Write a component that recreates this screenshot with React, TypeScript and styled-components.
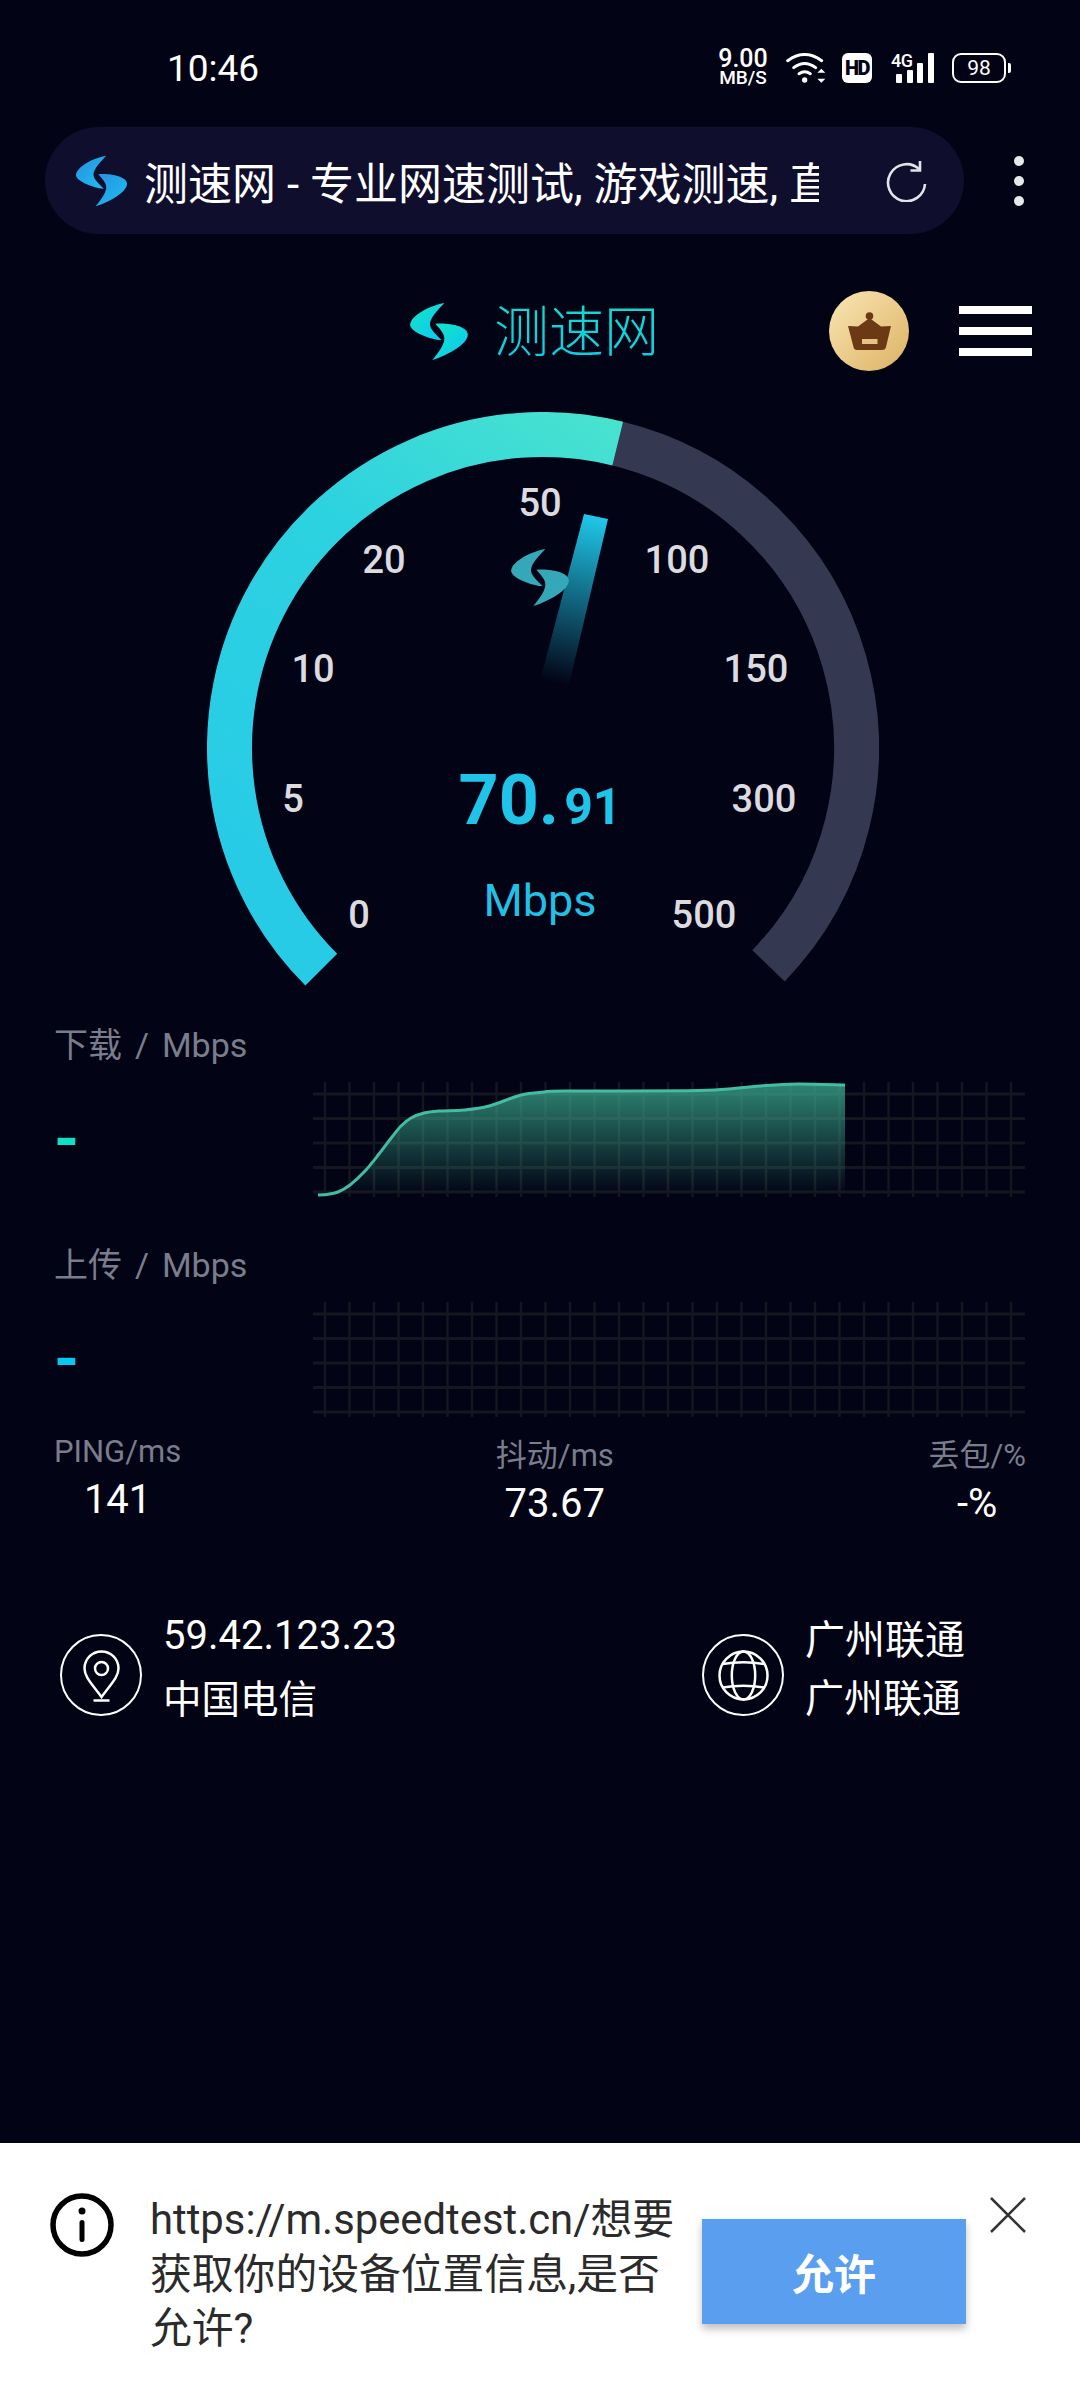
import React from "react";
import styled, { createGlobalStyle } from "styled-components";

const FONT = `Roboto, "Noto Sans CJK SC", sans-serif`;
const GAUGE_CX = 336;
const GAUGE_R = 313.5;

const GlobalStyle = createGlobalStyle`
  html, body {
    margin: 0;
    padding: 0;
    background: #020314;
  }
  * {
    box-sizing: border-box;
  }
`;

function polar(deg: number) {
  const rad = (deg * Math.PI) / 180;
  return {
    x: GAUGE_CX + GAUGE_R * Math.sin(rad),
    y: GAUGE_CX - GAUGE_R * Math.cos(rad),
  };
}

function arcPath(from: number, to: number) {
  const a = polar(from);
  const b = polar(to);
  const large = to - from > 180 ? 1 : 0;
  return `M${a.x} ${a.y} A${GAUGE_R} ${GAUGE_R} 0 ${large} 1 ${b.x} ${b.y}`;
}

// catmull-rom through the sampled points, so the line stays smooth
function smoothPath(pts: number[][]) {
  let d = `M${pts[0][0]} ${pts[0][1]}`;
  for (let i = 0; i < pts.length - 1; i++) {
    const p0 = pts[i - 1] || pts[i];
    const p1 = pts[i];
    const p2 = pts[i + 1];
    const p3 = pts[i + 2] || p2;
    const c1x = p1[0] + (p2[0] - p0[0]) / 6;
    const c1y = p1[1] + (p2[1] - p0[1]) / 6;
    const c2x = p2[0] - (p3[0] - p1[0]) / 6;
    const c2y = p2[1] - (p3[1] - p1[1]) / 6;
    d += ` C${c1x} ${c1y} ${c2x} ${c2y} ${p2[0]} ${p2[1]}`;
  }
  return d;
}

const TICKS = [
  { label: "0", x: 152, y: 502.5 },
  { label: "5", x: 86, y: 386.5 },
  { label: "10", x: 106, y: 256.5 },
  { label: "20", x: 177, y: 147.5 },
  { label: "50", x: 333, y: 90.5 },
  { label: "100", x: 470, y: 147.5 },
  { label: "150", x: 549, y: 256.5 },
  { label: "300", x: 557, y: 386.5 },
  { label: "500", x: 497, y: 502.5 },
];

const CURVE = smoothPath([
  [5, 115],
  [14, 114.5],
  [25, 112],
  [37, 105],
  [52, 91],
  [66, 74],
  [79, 57],
  [88, 46],
  [98, 38],
  [111, 33],
  [126, 31],
  [151, 30],
  [176, 26],
  [208, 15],
  [231, 12],
  [251, 11],
  [375, 10.7],
  [415, 9],
  [450, 5.7],
  [484.5, 4],
  [532, 5],
]);

const GRID_H = [14, 38.5, 63, 87.5, 112];
const GRID_V = Array.from({ length: 29 }, (_, i) => 12 + i * 24.5);

function LogoMark({ id, from, to }: { id: string; from: string; to: string }) {
  return (
    <svg viewBox="33 22 172 170" width="100%" height="100%">
      <defs>
        <linearGradient id={id} x1="0" y1="0" x2="1" y2="1">
          <stop offset="0" stopColor={from} />
          <stop offset="1" stopColor={to} />
        </linearGradient>
      </defs>
      <path
        fill={`url(#${id})`}
        d="M135 22 C90 30 38 58 33 85 C30 106 90 130 127 133 C112 118 92 102 92 85 C92 66 118 40 135 22 Z"
      />
      <path
        fill={`url(#${id})`}
        d="M108 84 C150 80 205 92 205 116 C205 146 140 180 99 192 C118 170 135 146 135 128 C135 112 120 98 108 84 Z"
      />
    </svg>
  );
}

function Chart({ curve }: { curve?: string }) {
  return (
    <svg width="713" height="120" viewBox="0 0 713 120">
      <defs>
        <linearGradient id="areaFill" x1="0" y1="0" x2="0" y2="1">
          <stop offset="0" stopColor="#3aa98e" stopOpacity="0.78" />
          <stop offset="1" stopColor="#3aa98e" stopOpacity="0" />
        </linearGradient>
      </defs>
      {GRID_V.map((x) => (
        <line key={x} x1={x} x2={x} y1="2" y2="117" stroke="#15161f" strokeWidth="2.5" />
      ))}
      {GRID_H.map((y) => (
        <line key={y} x1="0" x2="712" y1={y} y2={y} stroke="#15161f" strokeWidth="3" />
      ))}
      {curve && (
        <>
          <path d={`${curve} L532 112 L5 112 Z`} fill="url(#areaFill)" />
          <path d={curve} fill="none" stroke="#43bda1" strokeWidth="3" />
        </>
      )}
    </svg>
  );
}

export default function App() {
  return (
    <Page>
      <GlobalStyle />

      <StatusBar>
        <Clock>10:46</Clock>
        <StatusIcons>
          <NetSpeed>
            <b>9.00</b>
            <small>MB/S</small>
          </NetSpeed>
          <WifiIcon viewBox="262 70 123 88" width="41" height="30">
            <g fill="none" stroke="#fff" strokeWidth="9" strokeLinecap="round">
              <path d="M267 92 Q318 55 369 92" />
              <path d="M285 113 Q318 88 351 113" />
              <path d="M301 131 Q318 120 335 131" />
            </g>
            <circle cx="318" cy="150" r="8" fill="#fff" />
            <path d="M368 116 L380 128 H356 Z M368 158 L380 146 H356 Z" fill="#fff" />
          </WifiIcon>
          <HdBadge>HD</HdBadge>
          <SignalIcon viewBox="0 0 44 30" width="44" height="30">
            <text
              x="0"
              y="14"
              fontSize="18"
              fontFamily="Roboto"
              fontWeight="500"
              letterSpacing="-0.5"
              fill="#fff"
            >
              4G
            </text>
            <rect x="5" y="21" width="6" height="9" rx="1" fill="#fff" />
            <rect x="16" y="17" width="6" height="13" rx="1" fill="#fff" />
            <rect x="26" y="10" width="6" height="20" rx="1" fill="#fff" />
            <rect x="37" y="0" width="6" height="30" rx="1" fill="#fff" />
          </SignalIcon>
          <Battery>
            <BatteryBody>98</BatteryBody>
            <BatteryCap />
          </Battery>
        </StatusIcons>
      </StatusBar>

      <BrowserBar>
        <AddressBar>
          <AddressLogo>
            <LogoMark id="logoBlue" from="#2a8fe0" to="#1cc0f2" />
          </AddressLogo>
          <PageTitle>测速网 - 专业网速测试, 游戏测速, 直播测速</PageTitle>
          <ReloadIcon viewBox="0 0 42 42" width="42" height="42">
            <path
              d="M33 9 A18.5 18.5 0 1 0 39 24"
              fill="none"
              stroke="#e4e4e8"
              strokeWidth="2.6"
            />
            <path d="M34 1 V10.5 H24.5" fill="none" stroke="#e4e4e8" strokeWidth="2.6" />
          </ReloadIcon>
        </AddressBar>
        <Kebab>
          <i />
          <i />
          <i />
        </Kebab>
      </BrowserBar>

      <SiteHeader>
        <HeaderLogo>
          <LogoMark id="logoTeal" from="#14e6c6" to="#0bc6f4" />
        </HeaderLogo>
        <BrandName>测速网</BrandName>
        <VipBadge>
          <svg viewBox="0 0 80 80" width="80" height="80">
            <defs>
              <linearGradient id="gold" x1="0" y1="0" x2="1" y2="1">
                <stop offset="0" stopColor="#fae6b4" />
                <stop offset="1" stopColor="#dcb264" />
              </linearGradient>
            </defs>
            <circle cx="40" cy="40" r="40" fill="url(#gold)" />
            <circle cx="40.5" cy="25" r="3.8" fill="#6b3a14" />
            <path
              d="M19 35 L29 35.5 L40.5 27 L52 35.5 L62 35 L57 56 Q56.5 59 53 59 H28 Q25 59 24.5 56 Z"
              fill="#6b3a14"
            />
            <rect x="33" y="48" width="15.5" height="5" fill="#e6c189" />
          </svg>
        </VipBadge>
        <Hamburger>
          <i />
          <i />
          <i />
        </Hamburger>
      </SiteHeader>

      <Gauge>
        <svg viewBox="0 0 672 580" width="672" height="580">
          <defs>
            <linearGradient id="arcFill" gradientUnits="userSpaceOnUse" x1="100" y1="500" x2="420" y2="20">
              <stop offset="0" stopColor="#28cbe6" />
              <stop offset="0.6" stopColor="#2dd2e0" />
              <stop offset="1" stopColor="#48e2cf" />
            </linearGradient>
            <linearGradient id="needleFill" gradientUnits="userSpaceOnUse" x1="389" y1="104" x2="347" y2="271">
              <stop offset="0" stopColor="#20c8ea" />
              <stop offset="1" stopColor="#20c8ea" stopOpacity="0" />
            </linearGradient>
          </defs>
          <path d={arcPath(13.8, 134)} fill="none" stroke="#343850" strokeWidth="45" />
          <path d={arcPath(-135, 13.8)} fill="none" stroke="url(#arcFill)" strokeWidth="45" />
          <polygon points="377,102 401,107 362,273 333,269" fill="url(#needleFill)" />
        </svg>
        <GaugeLogo>
          <LogoMark id="logoGauge" from="#35a6b6" to="#33aabb" />
        </GaugeLogo>
        {TICKS.map((t) => (
          <Tick key={t.label} $x={t.x} $y={t.y}>
            {t.label}
          </Tick>
        ))}
        <Speed $x={333} $y={388}>
          70.<small>91</small>
        </Speed>
        <Unit $x={333} $y={488}>
          Mbps
        </Unit>
      </Gauge>

      <Metric>
        <MetricLabel>下载 / Mbps</MetricLabel>
        <MetricRow>
          <Dash $color="#0ee0c8">-</Dash>
          <Chart curve={CURVE} />
        </MetricRow>
      </Metric>

      <Metric>
        <MetricLabel>上传 / Mbps</MetricLabel>
        <MetricRow>
          <Dash $color="#06c8f0">-</Dash>
          <Chart />
        </MetricRow>
      </Metric>

      <Stats>
        <Stat $raised>
          <StatLabel>PING/ms</StatLabel>
          <StatValue>141</StatValue>
        </Stat>
        <Stat>
          <StatLabel>抖动/ms</StatLabel>
          <StatValue>73.67</StatValue>
        </Stat>
        <Stat>
          <StatLabel>丢包/%</StatLabel>
          <StatValue>-%</StatValue>
        </Stat>
      </Stats>

      <Network>
        <NetworkItem>
          <IconRing>
            <svg viewBox="11.5 11.5 77 77" width="77" height="77">
              <g fill="none" stroke="#fff" strokeWidth="2.5">
                <path d="M50 71.5 C42 60 33 52 33 43 A17 17 0 0 1 67 43 C67 52 58 60 50 71.5 Z" />
                <circle cx="50" cy="43" r="6.5" />
                <path d="M42 75 H58" />
              </g>
            </svg>
          </IconRing>
          <NetworkText $lineHeight={64} $top={0}>
            <NetworkLine>59.42.123.23</NetworkLine>
            <NetworkLine $size={38.5}>中国电信</NetworkLine>
          </NetworkText>
        </NetworkItem>
        <NetworkItem>
          <IconRing>
            <svg viewBox="11.5 11.5 77 77" width="77" height="77">
              <g fill="none" stroke="#fff" strokeWidth="2.5">
                <circle cx="50" cy="50" r="24" />
                <ellipse cx="50" cy="50" rx="11.7" ry="24" />
                <path d="M29 38.5 Q50 35 71 38.5 M29 62 Q50 58.5 71 62" />
              </g>
            </svg>
          </IconRing>
          <NetworkText $lineHeight={58} $top={8}>
            <NetworkLine>广州联通</NetworkLine>
            <NetworkLine $size={39}>广州联通</NetworkLine>
          </NetworkText>
        </NetworkItem>
      </Network>

      <Permission>
        <InfoIcon viewBox="0 0 64 64" width="64" height="64">
          <circle cx="32" cy="32" r="29" fill="none" stroke="#000" strokeWidth="5.5" />
          <circle cx="32" cy="18" r="3.5" fill="#000" />
          <rect x="29.5" y="27" width="5" height="22" rx="2.5" fill="#000" />
        </InfoIcon>
        <PermissionText>https://m.speedtest.cn/想要获取你的设备位置信息,是否允许?</PermissionText>
        <AllowButton>允许</AllowButton>
        <CloseIcon viewBox="0 0 36 36" width="36" height="36">
          <path d="M1 1 L35 35 M35 1 L1 35" stroke="#333" strokeWidth="2.5" fill="none" />
        </CloseIcon>
      </Permission>
    </Page>
  );
}

const Page = styled.div`
  display: flex;
  flex-direction: column;
  width: 1080px;
  height: 2400px;
  overflow: hidden;
  background: #020314;
  font-family: ${FONT};
  color: #fff;
`;

const StatusBar = styled.div`
  display: flex;
  align-items: center;
  height: 36px;
  margin-top: 50px;
  padding: 0 69px 0 167px;
`;

const Clock = styled.span`
  font-size: 37px;
  font-weight: 400;
`;

const StatusIcons = styled.div`
  display: flex;
  align-items: center;
  margin-left: auto;
`;

const NetSpeed = styled.div`
  display: flex;
  flex-direction: column;
  align-items: center;
  width: 50px;
  b {
    font-size: 25px;
    line-height: 20px;
    font-weight: 500;
  }
  small {
    font-size: 19px;
    line-height: 18px;
    font-weight: 500;
  }
`;

const WifiIcon = styled.svg`
  margin-left: 18px;
`;

const HdBadge = styled.span`
  display: flex;
  align-items: center;
  justify-content: center;
  width: 30px;
  height: 30px;
  margin-left: 15px;
  border-radius: 6px;
  background: #fff;
  color: #020314;
  font-size: 20px;
  font-weight: 900;
  letter-spacing: -1.5px;
`;

const SignalIcon = styled.svg`
  margin-left: 19px;
  overflow: visible;
`;

const Battery = styled.div`
  display: flex;
  align-items: center;
  margin-left: 17px;
`;

const BatteryBody = styled.div`
  display: flex;
  align-items: center;
  justify-content: center;
  width: 54px;
  height: 30px;
  border: 2.5px solid #fff;
  border-radius: 9px;
  font-size: 21px;
`;

const BatteryCap = styled.div`
  width: 3px;
  height: 10px;
  margin-left: 2px;
  border-radius: 0 2px 2px 0;
  background: #fff;
`;

const BrowserBar = styled.div`
  display: flex;
  align-items: center;
  margin-top: 41px;
  padding-left: 45px;
`;

const AddressBar = styled.div`
  display: flex;
  align-items: center;
  width: 919px;
  height: 107px;
  padding-left: 31px;
  border-radius: 54px;
  background: #0f0f2d;
`;

const AddressLogo = styled.div`
  flex: none;
  width: 51px;
  height: 52px;
`;

const PageTitle = styled.div`
  flex: none;
  width: 675px;
  margin-left: 17px;
  overflow: hidden;
  white-space: nowrap;
  font-size: 44px;
`;

const ReloadIcon = styled.svg`
  flex: none;
  margin-left: 67px;
`;

const Kebab = styled.div`
  display: flex;
  flex-direction: column;
  gap: 10px;
  margin-left: 50px;
  i {
    display: block;
    width: 10px;
    height: 10px;
    border-radius: 50%;
    background: #e8e8ec;
  }
`;

const SiteHeader = styled.div`
  display: flex;
  align-items: center;
  height: 80px;
  margin-top: 57px;
  padding: 0 48px 0 410px;
`;

const HeaderLogo = styled.div`
  width: 58px;
  height: 57px;
`;

const BrandName = styled.div`
  margin: 0 0 9px 26px;
  font-size: 55px;
  font-weight: 300;
  background: linear-gradient(180deg, #10dfc8, #0ccbe6);
  -webkit-background-clip: text;
  background-clip: text;
  color: transparent;
`;

const VipBadge = styled.div`
  display: flex;
  margin-left: auto;
`;

const Hamburger = styled.div`
  display: flex;
  flex-direction: column;
  gap: 13px;
  margin-left: 50px;
  i {
    display: block;
    width: 73px;
    height: 8px;
    background: #fff;
  }
`;

const Gauge = styled.div`
  position: relative;
  width: 672px;
  height: 580px;
  margin: 41px 0 0 207px;
`;

const GaugeLogo = styled.div`
  position: absolute;
  left: 304px;
  top: 137px;
  width: 58px;
  height: 57px;
`;

const Tick = styled.span<{ $x: number; $y: number }>`
  position: absolute;
  left: ${(p) => p.$x}px;
  top: ${(p) => p.$y}px;
  transform: translate(-50%, -50%);
  font-size: 38px;
  font-weight: 500;
  color: #dcdce0;
`;

const Speed = styled(Tick)`
  font-size: 70px;
  font-weight: 700;
  color: #1fc4e8;
  white-space: nowrap;
  small {
    margin-left: 5px;
    font-size: 50px;
  }
`;

const Unit = styled(Tick)`
  font-size: 45px;
  font-weight: 400;
  color: #22c0e4;
`;

const Metric = styled.section`
  height: 176px;
  margin-top: 32px;
  & + & {
    margin-top: 44px;
  }
`;

const MetricLabel = styled.div`
  height: 40px;
  padding-left: 54px;
  font-size: 34px;
  line-height: 43px;
  word-spacing: 4.5px;
  color: #7a7d8c;
`;

const MetricRow = styled.div`
  display: flex;
  align-items: center;
  margin-top: 16px;
  padding-left: 54px;
`;

const Dash = styled.span<{ $color: string }>`
  width: 259px;
  font-size: 64px;
  font-weight: 700;
  line-height: 64px;
  color: ${(p) => p.$color};
`;

const Stats = styled.div`
  display: flex;
  align-items: flex-start;
  justify-content: space-between;
  margin-top: 16px;
  padding: 0 54px 0 54px;
`;

const Stat = styled.div<{ $raised?: boolean }>`
  display: flex;
  flex-direction: column;
  align-items: center;
  margin-top: ${(p) => (p.$raised ? -4 : 0)}px;
`;

const StatLabel = styled.div`
  font-size: 31px;
  line-height: 40px;
  color: #7a7d8c;
`;

const StatValue = styled.div`
  margin-top: 4px;
  font-size: 40px;
  line-height: 48px;
`;

const Network = styled.div`
  display: flex;
  margin-top: 76px;
  padding-left: 60px;
`;

const NetworkItem = styled.div`
  display: flex;
  align-items: flex-start;
  gap: 21px;
  width: 642px;
  &:last-child {
    width: auto;
  }
`;

const IconRing = styled.div`
  flex: none;
  display: flex;
  align-items: center;
  justify-content: center;
  width: 82px;
  height: 82px;
  margin-top: 30px;
  border: 2.5px solid #fff;
  border-radius: 50%;
`;

const NetworkText = styled.div<{ $lineHeight: number; $top: number }>`
  margin-top: ${(p) => p.$top}px;
  line-height: ${(p) => p.$lineHeight}px;
`;

const NetworkLine = styled.div<{ $size?: number }>`
  font-size: ${(p) => p.$size || 40}px;
`;

const Permission = styled.div`
  display: flex;
  align-items: flex-start;
  height: 257px;
  margin-top: auto;
  padding: 50px 0 0 50px;
  background: #fff;
`;

const InfoIcon = styled.svg`
  flex: none;
`;

const PermissionText = styled.div`
  flex: none;
  width: 532px;
  margin-left: 36px;
  font-size: 41.8px;
  line-height: 54.5px;
  color: #2b2b2b;
`;

const AllowButton = styled.button`
  flex: none;
  width: 264px;
  height: 105px;
  margin: 26px 0 0 20px;
  border: none;
  background: #5a9eef;
  box-shadow: 0 5px 8px rgba(0, 0, 0, 0.25);
  color: #fff;
  font-family: ${FONT};
  font-size: 42px;
  font-weight: 700;
`;

const CloseIcon = styled.svg`
  flex: none;
  margin: 4px 0 0 24px;
`;
